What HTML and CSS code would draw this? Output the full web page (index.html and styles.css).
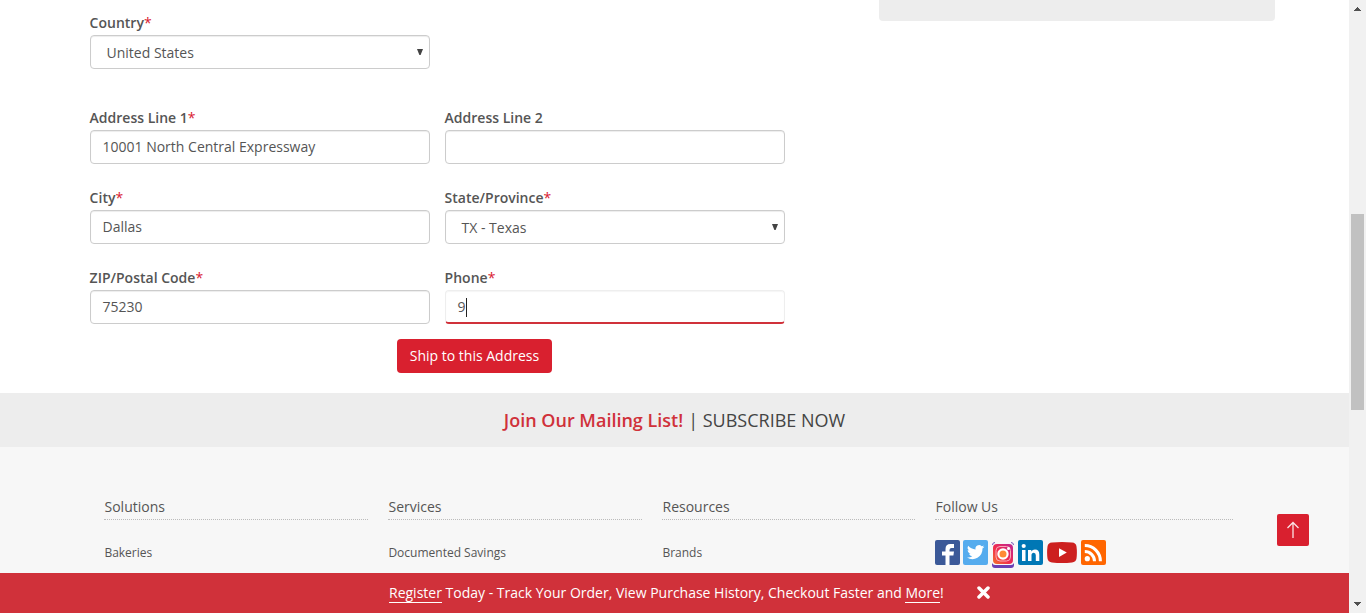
FILE: index.html
```html
<!DOCTYPE html>
<html lang="en">
<head>
<meta charset="utf-8">
<title>Shipping Address</title>
<link rel="stylesheet" href="styles.css">
</head>
<body>
<div class="page">
  <main class="checkout">
    <form class="address-form">
      <div class="field country">
        <label class="label">Country<span class="required">*</span></label>
        <div class="control select"><span class="value">United States</span><svg class="caret" viewBox="0 0 6 6"><path d="M0 0h6L3.6 6H2.4z" fill="#444"/></svg></div>
      </div>
      <div class="grid">
        <div class="field">
          <label class="label">Address Line 1<span class="required">*</span></label>
          <div class="control"><span class="value">10001 North Central Expressway</span></div>
        </div>
        <div class="field">
          <label class="label">Address Line 2</label>
          <div class="control"></div>
        </div>
        <div class="field">
          <label class="label">City<span class="required">*</span></label>
          <div class="control"><span class="value">Dallas</span></div>
        </div>
        <div class="field">
          <label class="label">State/Province<span class="required">*</span></label>
          <div class="control select"><span class="value">TX - Texas</span><svg class="caret" viewBox="0 0 6 6"><path d="M0 0h6L3.6 6H2.4z" fill="#444"/></svg></div>
        </div>
        <div class="field">
          <label class="label">ZIP/Postal Code<span class="required">*</span></label>
          <div class="control"><span class="value">75230</span></div>
        </div>
        <div class="field">
          <label class="label">Phone<span class="required">*</span></label>
          <div class="control focused"><span class="value">9</span><span class="cursor"></span></div>
        </div>
      </div>
      <button class="submit" type="button">Ship to this Address</button>
    </form>
    <aside class="summary"></aside>
  </main>
  <section class="mailing"><span class="join">Join Our Mailing List!</span><span class="subscribe">| SUBSCRIBE NOW</span></section>
  <footer class="footer">
    <div class="column"><h4 class="heading">Solutions</h4><a class="link">Bakeries</a></div>
    <div class="column"><h4 class="heading">Services</h4><a class="link">Documented Savings</a></div>
    <div class="column"><h4 class="heading">Resources</h4><a class="link">Brands</a></div>
    <div class="column">
      <h4 class="heading">Follow Us</h4>
      <div class="social">
        <svg class="facebook" width="25" height="25" viewBox="0 0 25 25"><rect width="25" height="25" rx="2" fill="#3b5998"/><path d="M10.500 25v-9.500H7v-4h3.500V9q0-5 5-5h3.500v4h-2.500q-2 0-2 2v1.500H19l-.6 4h-3.900V25z" fill="#fff"/></svg>
        <svg class="twitter" width="25" height="25" viewBox="0 0 25 25"><rect width="25" height="25" rx="2" fill="#55acee"/><path transform="translate(4 3.500) scale(.72)" fill="#fff" d="M24 4.600a10 10 0 0 1-2.800.8 5 5 0 0 0 2.200-2.700c-1 .6-2 1-3.100 1.200a4.900 4.900 0 0 0-8.400 4.500C7.700 8.100 4.100 6.100 1.700 3.200a4.900 4.900 0 0 0 1.500 6.600 5 5 0 0 1-2.200-.6 4.900 4.900 0 0 0 3.900 4.900 5 5 0 0 1-2.200.1 4.900 4.900 0 0 0 4.600 3.400A9.900 9.900 0 0 1 0 19.500 14 14 0 0 0 21.500 7.100 10 10 0 0 0 24 4.600z"/></svg>
        <svg class="instagram" width="22" height="26" viewBox="0 0 22 26">
          <defs><linearGradient id="ig" x1="0" y1="1" x2="1" y2="0"><stop offset="0" stop-color="#f5732c"/><stop offset=".45" stop-color="#f12b4e"/><stop offset="1" stop-color="#bd2596"/></linearGradient></defs>
          <path d="M0 21v2q0 3 3 3h16q3 0 3-3v-2q-1 2-3 2H3q-2 0-3-2z" fill="#6b3fb5"/>
          <path d="M.5 3Q.5.500 3 .5M19 .5Q21.500.5 21.500 3" fill="none" stroke="#7658bb"/>
          <rect x="1" y="2" width="20" height="20" rx="4" fill="url(#ig)"/>
          <rect x="4" y="4.500" width="14.500" height="14.500" rx="4" fill="none" stroke="#f9a9b6" stroke-width="1"/>
          <circle cx="11" cy="12" r="4.600" fill="#ff8b35" stroke="#fff" stroke-width="2.200"/><circle cx="16.500" cy="6.500" r="1.500" fill="#fff"/>
        </svg>
        <svg class="linkedin" width="25" height="25" viewBox="0 0 25 25"><rect width="25" height="25" rx="2" fill="#0077b5"/><circle cx="5.700" cy="6" r="2.100" fill="#fff"/><path d="M4 10h3.500v11H4zM10 10h3.300v1.500q1.200-1.900 3.700-1.900 4.300 0 4.300 5V21h-3.500v-5.800q0-2.500-2-2.500-2.300 0-2.300 2.600V21H10z" fill="#fff"/></svg>
        <svg class="youtube" width="30" height="21" viewBox="0 0 30 21"><path d="M5 .6Q15-.5 25 .6q4 .3 4.500 4 .8 6 0 12-.5 3.500-4.500 3.800-10 1-20 0-4-.3-4.500-3.800-.8-6 0-12Q1 .9 5 .6z" fill="#cd201f"/><path d="M12 6.300v8.600l7.800-4.300z" fill="#fff"/></svg>
        <svg class="rss" width="25" height="25" viewBox="0 0 25 25"><rect width="25" height="25" rx="2" fill="#f60"/><circle cx="6.300" cy="18.700" r="2.600" fill="#fff"/><path d="M3.800 11.500a9.700 9.700 0 0 1 9.700 9.700M3.800 5.600a15.600 15.600 0 0 1 15.600 15.600" fill="none" stroke="#fff" stroke-width="3"/></svg>
      </div>
    </div>
    <a class="to-top"><svg width="14" height="18" viewBox="0 0 14 18"><path d="M7 17V2M1.500 7 7 1.500 12.500 7" fill="none" stroke="#fbe2e4" stroke-width="1.300"/></svg></a>
  </footer>
  <div class="notice">
    <p class="message"><a class="notice-link">Register</a> Today - Track Your Order, View Purchase History, Checkout Faster and <a class="notice-link">More</a>!</p>
    <svg class="close" width="13" height="13" viewBox="0 0 13 13"><path d="m2 2 9 9m0-9-9 9" stroke="#fff" stroke-width="3.500" stroke-linecap="round"/></svg>
  </div>
</div>
<div class="scrollbar">
  <svg class="arrow" width="7" height="4" viewBox="0 0 7 4"><path d="M0 4V3h1V2h1V1h1V0h1v1h1v1h1v1h1v1z" fill="#505050"/></svg>
  <div class="thumb"></div>
  <svg class="arrow" width="7" height="4" viewBox="0 0 7 4"><path d="M0 0v1h1v1h1v1h1v1h1V3h1V2h1V1h1V0z" fill="#505050"/></svg>
</div>
</body>
</html>
```
FILE: styles.css
```css
* { box-sizing: border-box; }
body {
  margin: 0;
  display: flex;
  width: 1366px;
  height: 613px;
  overflow: hidden;
  background: #fff;
  color: #555;
  font: 14px/20px "Open Sans", sans-serif;
  white-space: nowrap;
}
.page { width: 1349px; display: flex; flex-direction: column; }
.checkout { height: 393px; padding-left: 90px; display: flex; gap: 94px; }
.address-form { width: 695px; padding-top: 13px; }
.field { width: 340px; }
.country { margin-bottom: 39px; }
.grid { display: grid; grid-template-columns: 340px 340px; gap: 24px 15px; }
.label { display: block; height: 22px; margin-left: -.4px; font-weight: 600; }
.required { color: #d9202f; font-weight: 400; }
.control {
  display: flex;
  align-items: center;
  height: 34px;
  padding: 0 11.5px;
  border: 1px solid #ccc;
  border-radius: 4px;
  box-shadow: inset 0 1px 1px rgba(0, 0, 0, .075);
}
.control .value { margin-top: -1px; }
.select { padding: 0 6px 0 15.5px; justify-content: space-between; }
.select .value { margin-top: 2px; }
.caret { width: 6px; height: 6px; margin-top: -1px; }
.focused { border-color: #eee; border-bottom: 2px solid #d0313a; box-shadow: inset 0 1px 1px rgba(0, 0, 0, .04); }
.focused .value { margin-top: 1px; }
.cursor { width: 1px; height: 19px; margin-top: 1px; background: #222; }
.submit {
  display: block;
  width: 155px;
  height: 34px;
  margin: 15px 0 0 307px;
  padding: 0;
  border: 0;
  border-radius: 4px;
  background: #d9202f;
  color: #fff;
  font: 500 14px/20px "Open Sans", sans-serif;
}
.summary { width: 396px; height: 21px; border-radius: 0 0 4px 4px; background: #ededed; }
.mailing {
  display: flex;
  justify-content: center;
  gap: 5px;
  height: 54px;
  background: #ededed;
  color: #444;
  font-size: 18px;
  line-height: 54px;
}
.join { color: #d0313a; font-weight: 600; }
.footer {
  display: grid;
  grid-template-columns: 264px 254px 253px 298px 32px;
  column-gap: 20px;
  height: 126px;
  padding: 50px 0 0 104px;
  background: #f7f7f7;
}
.heading {
  height: 23px;
  margin: 0 0 20px;
  padding-left: .5px;
  border-bottom: 1px dotted #bbb;
  font-size: 14px;
  font-weight: 400;
}
.link { display: block; padding-left: .4px; font-size: 12px; line-height: 25px; }
.social { display: flex; align-items: flex-start; padding-left: .4px; }
.twitter { margin-left: 3px; }
.instagram { margin: 2px 0 0 4px; }
.linkedin { margin-left: 4px; }
.youtube { margin: 2px 0 0 4px; }
.rss { margin-left: 4px; }
.to-top {
  display: flex;
  align-items: center;
  justify-content: center;
  width: 32px;
  height: 32px;
  margin: 17px 0 0 24px;
  border-radius: 2px;
  background: #d9202f;
}
.notice {
  display: flex;
  align-items: center;
  height: 40px;
  padding-left: 389px;
  background: #d0313a;
  color: #fff;
}
.message { width: 588px; margin: 0; font-weight: 500; }
.close { margin-top: -1px; }
.notice-link { display: inline-block; height: 20px; border-bottom: 1px solid #fff; line-height: 20px; }
.scrollbar {
  display: flex;
  flex-direction: column;
  align-items: center;
  width: 17px;
  padding: 7px 0;
  background: #f1f1f1;
}
.thumb { width: 13px; height: 196px; margin: 203px 0 auto; background: #c1c1c1; }
```
